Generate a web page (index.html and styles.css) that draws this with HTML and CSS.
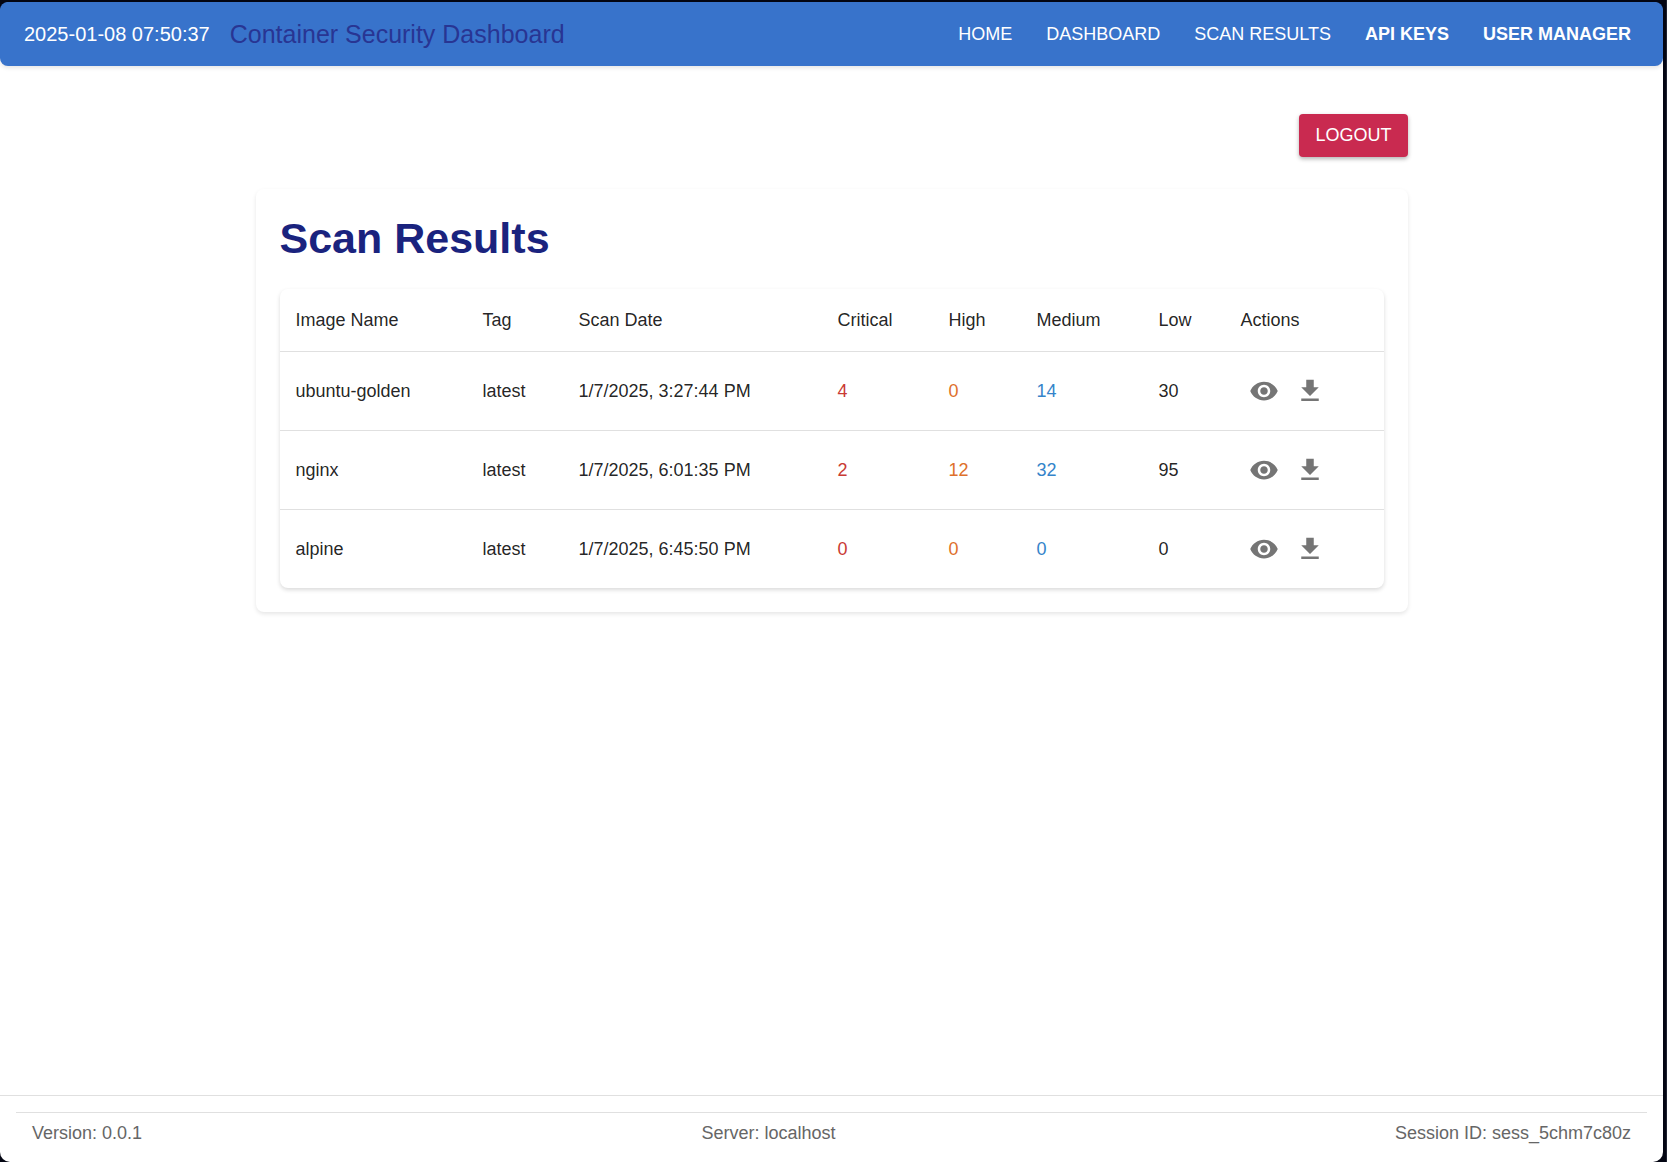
FILE: index.html
```html
<!DOCTYPE html>
<html lang="en">
<head>
<meta charset="utf-8">
<meta name="viewport" content="width=device-width, initial-scale=1">
<title>Container Security Dashboard</title>
<link rel="stylesheet" href="styles.css">
</head>
<body>
<svg class="sprite" aria-hidden="true">
  <symbol id="icon-view" viewBox="0 0 24 24"><path d="M12 4.5C7 4.5 2.73 7.61 1 12c1.73 4.39 6 7.5 11 7.5s9.27-3.11 11-7.5c-1.73-4.39-6-7.5-11-7.5M12 17c-2.76 0-5-2.24-5-5s2.24-5 5-5 5 2.24 5 5-2.24 5-5 5m0-8c-1.66 0-3 1.34-3 3s1.34 3 3 3 3-1.34 3-3-1.34-3-3-3"/></symbol>
  <symbol id="icon-download" viewBox="0 0 24 24"><path d="M19 9h-4V3H9v6H5l7 7zM5 18v2h14v-2z"/></symbol>
</svg>
<div class="window">
  <header class="app-bar">
    <div class="brand">
      <time class="clock" datetime="2025-01-08T07:50:37">2025-01-08 07:50:37</time>
      <span class="app-title">Container Security Dashboard</span>
    </div>
    <nav class="nav">
      <a class="nav-link" href="#home">HOME</a>
      <a class="nav-link" href="#dashboard">DASHBOARD</a>
      <a class="nav-link" href="#scan-results">SCAN RESULTS</a>
      <a class="nav-link nav-link-admin" href="#api-keys">API KEYS</a>
      <a class="nav-link nav-link-admin" href="#user-manager">USER MANAGER</a>
    </nav>
  </header>
  <main class="content">
    <div class="toolbar"><button class="logout" type="button">LOGOUT</button></div>
    <section class="card">
      <h1 class="card-title">Scan Results</h1>
      <div class="table-wrap">
        <table class="scans">
          <colgroup>
            <col class="col-name"><col class="col-tag"><col class="col-date"><col class="col-critical">
            <col class="col-high"><col class="col-medium"><col class="col-low"><col class="col-actions">
          </colgroup>
          <thead>
            <tr><th scope="col">Image Name</th><th scope="col">Tag</th><th scope="col">Scan Date</th><th scope="col">Critical</th><th scope="col">High</th><th scope="col">Medium</th><th scope="col">Low</th><th scope="col">Actions</th></tr>
          </thead>
          <tbody>
            <tr>
              <td>ubuntu-golden</td><td>latest</td><td>1/7/2025, 3:27:44 PM</td>
              <td class="critical">4</td><td class="high">0</td><td class="medium">14</td><td>30</td>
              <td><div class="actions">
                <button class="icon-button" type="button" aria-label="View ubuntu-golden"><svg class="icon"><use href="#icon-view"/></svg></button>
                <button class="icon-button" type="button" aria-label="Download ubuntu-golden"><svg class="icon"><use href="#icon-download"/></svg></button>
              </div></td>
            </tr>
            <tr>
              <td>nginx</td><td>latest</td><td>1/7/2025, 6:01:35 PM</td>
              <td class="critical">2</td><td class="high">12</td><td class="medium">32</td><td>95</td>
              <td><div class="actions">
                <button class="icon-button" type="button" aria-label="View nginx"><svg class="icon"><use href="#icon-view"/></svg></button>
                <button class="icon-button" type="button" aria-label="Download nginx"><svg class="icon"><use href="#icon-download"/></svg></button>
              </div></td>
            </tr>
            <tr>
              <td>alpine</td><td>latest</td><td>1/7/2025, 6:45:50 PM</td>
              <td class="critical">0</td><td class="high">0</td><td class="medium">0</td><td>0</td>
              <td><div class="actions">
                <button class="icon-button" type="button" aria-label="View alpine"><svg class="icon"><use href="#icon-view"/></svg></button>
                <button class="icon-button" type="button" aria-label="Download alpine"><svg class="icon"><use href="#icon-download"/></svg></button>
              </div></td>
            </tr>
          </tbody>
        </table>
      </div>
    </section>
  </main>
  <footer class="footer">
    <div class="footer-row">
      <span>Version: 0.0.1</span>
      <span>Server: localhost</span>
      <span>Session ID: sess_5chm7c80z</span>
    </div>
  </footer>
</div>
</body>
</html>
```
FILE: styles.css
```css
* { box-sizing: border-box; }

body {
  margin: 0;
  padding: 2px 3px 0 0;
  border-right: 1px solid #1d2130;
  min-height: 100vh;
  display: flex;
  background: #040613;
  color: rgba(0, 0, 0, 0.87);
  font-family: "Liberation Sans", Helvetica, Arial, sans-serif;
  font-size: 18px;
  line-height: 24px;
}

.sprite { display: none; }

.window {
  flex: 1;
  min-width: 0;
  display: flex;
  flex-direction: column;
  background: #fff;
  border-radius: 10px;
}

/* Top bar */
.app-bar {
  display: flex;
  align-items: center;
  justify-content: space-between;
  min-height: 64px;
  padding: 0 32px 0 24px;
  border-radius: 8px;
  background: #3873cb;
  color: #fff;
  box-shadow: 0 2px 4px rgba(0, 0, 0, 0.1);
}

.brand { display: flex; align-items: center; gap: 20px; }
.clock { font-size: 20px; }
.app-title { font-size: 25px; color: #283593; }

.nav { display: flex; gap: 34px; }
.nav-link { color: inherit; text-decoration: none; }
.nav-link-admin { font-weight: 700; }

/* Main column */
.content {
  flex: 1;
  width: 100%;
  max-width: 1200px;
  margin: 0 auto;
  padding: 48px 24px;
}

.toolbar { display: flex; justify-content: flex-end; margin-bottom: 32px; }

.logout {
  height: 43px;
  padding: 0 16px 2px;
  border: 0;
  border-radius: 4px;
  background: #c92a50;
  color: #fff;
  font: inherit;
  box-shadow: 0 2px 4px rgba(0, 0, 0, 0.3);
}

.card {
  padding: 24px;
  border-radius: 8px;
  box-shadow: 0 2px 4px rgba(0, 0, 0, 0.1);
}

.card-title {
  margin: 0 0 26px;
  color: #1a237e;
  font-size: 43px;
  line-height: 50px;
}

/* Results table */
.table-wrap {
  border-radius: 8px;
  box-shadow: 0 2px 4px rgba(0, 0, 0, 0.15);
}

.scans { width: 100%; table-layout: fixed; border-collapse: separate; border-spacing: 0; }
.scans th, .scans td { padding: 16px 0 16px 16px; border-bottom: 1px solid #e0e0e0; text-align: left; }
.scans th { font-weight: 400; line-height: 30px; }
.scans tbody tr:last-child td { border-bottom: 0; }

/* Column widths act as proportions of the full table width */
.col-name { width: 187px; }
.col-tag { width: 96px; }
.col-date { width: 259px; }
.col-critical { width: 111px; }
.col-high { width: 88px; }
.col-medium { width: 122px; }
.col-low { width: 82px; }
.col-actions { width: 159px; }

.critical { color: #c93a34; }
.high { color: #de702b; }
.medium { color: #3484ca; }

.actions { display: flex; }
.icon-button { display: flex; padding: 8px; border: 0; background: none; color: #757575; }
.icon { width: 30px; height: 30px; fill: currentColor; }

/* Status footer */
.footer { padding: 16px; border-top: 1px solid #e0e0e0; }

.footer-row {
  display: flex;
  justify-content: space-between;
  padding: 8px 16px 0;
  border-top: 1px solid #e0e0e0;
  color: #666;
  line-height: 25px;
}
```
